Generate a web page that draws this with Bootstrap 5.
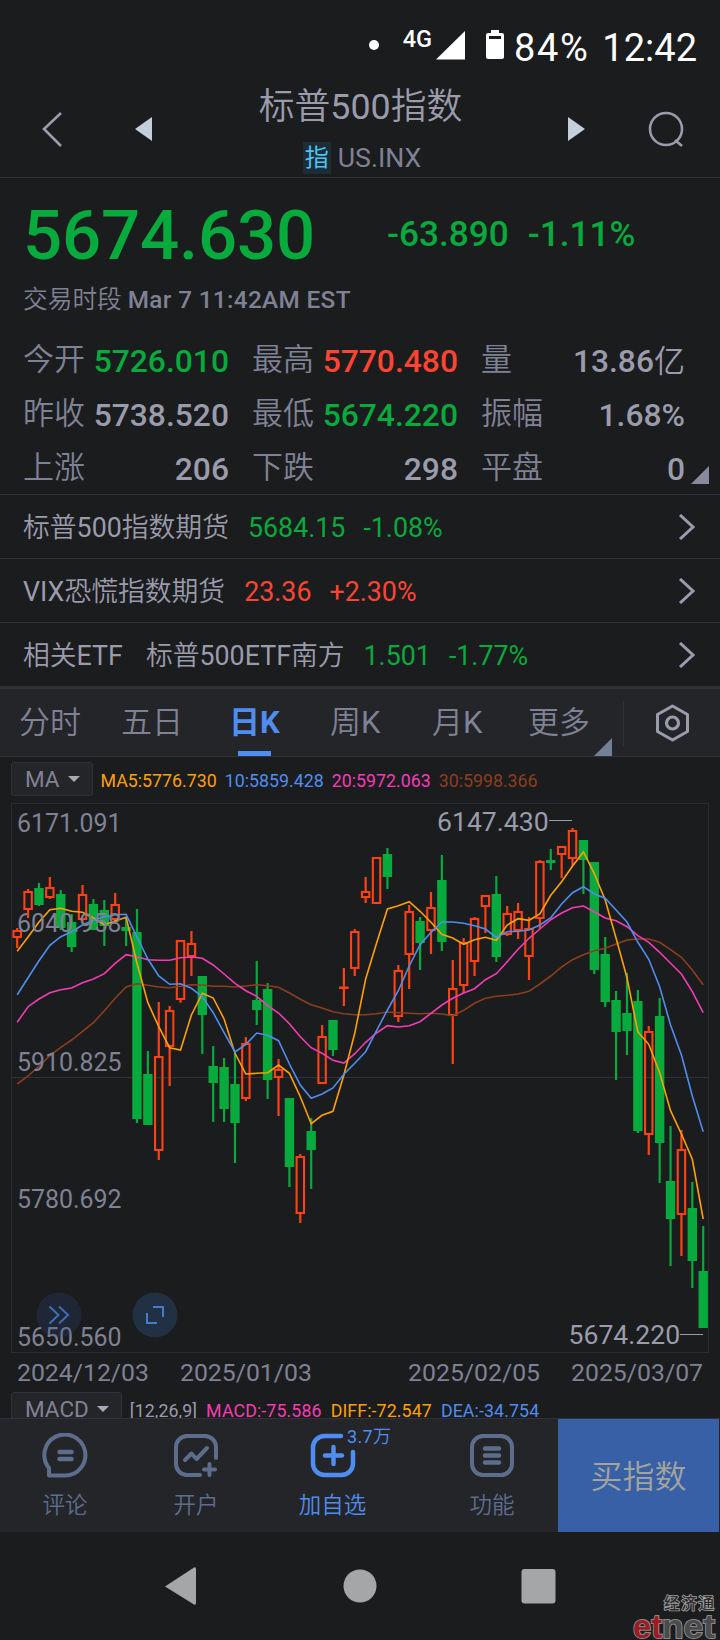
<!DOCTYPE html>
<html lang="zh-CN">
<head>
<meta charset="utf-8">
<meta name="viewport" content="width=device-width, initial-scale=1">
<title>标普500指数</title>
<link href="https://cdn.jsdelivr.net/npm/bootstrap@5.3.0/dist/css/bootstrap.min.css" rel="stylesheet">
<style>
:root{--bg:#1b1c1e;--panel:#242529;--rule:#30313b;--up:#ff4532;--down:#07aa3c;--txt:#9a9bab;--dim:#7f8294;--blue:#4f8df0;--slate:#5d6d8c}
body{background:var(--bg);color:var(--txt);font-family:Roboto,"Noto Sans CJK SC",sans-serif;width:720px;height:1640px;overflow:hidden;margin:0}
svg{display:block;flex:none}
i{font-style:normal;font-weight:400}
.down{color:var(--down)}.up{color:var(--up)}.dim{color:var(--dim)}.blue{color:var(--blue)}
.status{height:76px;padding:30px 23px 0 0;color:#fff;font-size:38px;line-height:36px}
.g4{font-size:23.5px;font-weight:500;line-height:19px}
.bat{letter-spacing:1.6px}
.head{height:102px;border-bottom:1px solid var(--rule);padding:0 36px 0 41px}
.title{font-size:35.8px;line-height:44px;font-weight:350}
.code{font-size:26.7px;line-height:32px}
.tag{font-size:24px;line-height:32px;width:28px;background:#1c2d36;color:#4cc3f7;margin-right:7px}
.quote{height:317px;border-bottom:1px solid var(--rule);padding:20px 35px 0 23px}
.price{font-size:69px;line-height:76px;font-weight:500;width:364px;letter-spacing:-.2px}
.chg{font-size:35.2px;line-height:40px;font-weight:500;margin-top:16px}
.sess{font-size:24.3px;line-height:30px;margin-top:11px;font-weight:500;letter-spacing:.35px}
.sess span,.stats span{font-weight:350}
.sess span{font-size:24.7px;letter-spacing:0;margin-right:6px}
.stats{display:grid;grid-template-columns:206px 206px 204px;column-gap:23px;grid-auto-rows:54px;margin-top:19px;font-size:31.8px;font-weight:500;line-height:54px}
.stats .dim{font-size:31px;line-height:52px}
.stats div div span{font-size:31px}
.linkrow{height:64px;border-bottom:1px solid var(--rule);padding:3px 24px 0 23px;font-size:26.8px;white-space:pre}
.linkrow svg{margin-top:-3px}
.linkrow.end{height:66px;border-bottom:3px solid var(--rule)}
.lk{font-weight:350}
.tabs{height:68px;background:var(--panel);border-bottom:1px solid var(--rule);font-size:31px;line-height:68px;padding-left:19px;font-weight:350}
.tabs>div{flex:none}
.on{color:var(--blue);font-weight:700;position:relative}
.on::after{content:"";position:absolute;left:9px;bottom:0;width:33px;height:5px;background:var(--blue)}
.ind{height:46px;font-size:17.8px;padding:5px 0 0 11px}
.pick{height:34px;background:var(--panel);border:1px solid var(--rule);border-radius:3px;font-size:22.5px;color:var(--dim);padding:2px 12px 0 13px;margin-right:8px}
.caret{border:6px solid transparent;border-top:6px solid #a7a9b8;border-bottom:0;margin:-3px 0 0 8px}
.vals{height:38px;gap:8px}
.chart{height:550px}
.chart text{font-family:Roboto,sans-serif;font-size:24.9px;fill:var(--dim)}
.chart .ext{font-size:26.6px;fill:var(--txt)}
.dates{height:37px;font-size:24.8px;line-height:39px;padding:0 17px;color:var(--dim)}
.macd{height:28px;overflow:hidden;padding-top:2px}
.macd .vals{gap:9px;letter-spacing:.1px}
.bar{height:114px;background:var(--panel);border-top:1px solid var(--rule);color:var(--slate);font-size:22.5px;font-weight:350;line-height:30px}
.bar>div{position:relative;padding-top:14px}
.bar svg{margin-bottom:11px}
.cnt{position:absolute;font-size:18px;line-height:22px;left:85px;top:7px;letter-spacing:.3px}
.buy{width:161px;height:113px;background:#3760a6;color:#a5a39d;font-size:32px;line-height:116px}
.nav3{height:108px;position:relative}
.wm{position:absolute;right:3px;bottom:0;text-align:right}
.wm text{paint-order:stroke}
</style>
<script src="https://cdn.jsdelivr.net/npm/bootstrap@5.3.0/dist/js/bootstrap.bundle.min.js"></script>
</head>
<body>
<div class="status d-flex justify-content-end">
  <svg width="12" height="36"><circle cx="6" cy="15" r="5" fill="#fff"/></svg>
  <span class="g4" style="margin-left:23px">4G</span>
  <svg width="30" height="32" style="margin-left:4px"><path d="M0 29.500 29 1V29.500Z" fill="#fff"/></svg>
  <svg width="18" height="32" style="margin:0 10px 0 20px"><path fill="#fff" fill-rule="evenodd" d="M5 0h8v3h3a2 2 0 0 1 2 2v22a2 2 0 0 1-2 2H2a2 2 0 0 1-2-2V5a2 2 0 0 1 2-2h3zM3 6v3h12V6z"/></svg>
  <span class="bat">84%</span><span style="margin-left:13px">12:42</span>
</div>
<div class="head d-flex justify-content-between">
  <svg width="112" height="102"><path d="M20 37 3 53 20 70" fill="none" stroke="#9a9bab" stroke-width="2.6"/><path d="M94 53 111 41V65Z" fill="#c3d0dc"/></svg>
  <div class="text-center" style="margin-top:9px">
    <div class="title">标普<i>500</i>指数</div>
    <div class="code dim d-flex justify-content-center" style="margin-top:13px;margin-left:3px"><span class="tag">指</span>US.INX</div>
  </div>
  <svg width="116" height="102"><path d="M0 41 17 53 0 65Z" fill="#c3d0dc"/><circle cx="98" cy="53" r="16" fill="none" stroke="#9a9bab" stroke-width="2.6"/><path d="M107 64 114 70" stroke="#9a9bab" stroke-width="2.6"/></svg>
</div>
<div class="quote position-relative">
  <div class="d-flex down"><div class="price">5674.630</div><div class="chg">-63.890</div><div class="chg" style="margin-left:19px">-1.11%</div></div>
  <div class="sess dim"><span>交易时段</span>Mar 7 11:42AM EST</div>
  <div class="stats">
    <div class="d-flex justify-content-between"><span class="dim">今开</span><div class="down">5726.010</div></div>
    <div class="d-flex justify-content-between"><span class="dim">最高</span><div class="up">5770.480</div></div>
    <div class="d-flex justify-content-between"><span class="dim">量</span><div>13.86<span>亿</span></div></div>
    <div class="d-flex justify-content-between"><span class="dim">昨收</span><div>5738.520</div></div>
    <div class="d-flex justify-content-between"><span class="dim">最低</span><div class="down">5674.220</div></div>
    <div class="d-flex justify-content-between"><span class="dim">振幅</span><div>1.68%</div></div>
    <div class="d-flex justify-content-between"><span class="dim">上涨</span><div>206</div></div>
    <div class="d-flex justify-content-between"><span class="dim">下跌</span><div>298</div></div>
    <div class="d-flex justify-content-between"><span class="dim">平盘</span><div>0</div></div>
  </div>
  <svg class="position-absolute" style="right:11px;bottom:10px" width="18" height="18"><path d="M0 18 18 0V18Z" fill="#868a9a"/></svg>
</div>
<div class="linkrow d-flex align-items-center"><span class="lk">标普<i>500</i>指数期货</span><span class="down" style="margin-left:19px">5684.15</span><span class="down" style="margin-left:18px">-1.08%</span><svg class="ms-auto" width="18" height="26"><path d="M2 1 15 13 2 25" fill="none" stroke="#9a9bab" stroke-width="3"/></svg></div>
<div class="linkrow d-flex align-items-center"><span class="lk"><i>VIX</i>恐慌指数期货</span><span class="up" style="margin-left:19px">23.36</span><span class="up" style="margin-left:18px">+2.30%</span><svg class="ms-auto" width="18" height="26"><path d="M2 1 15 13 2 25" fill="none" stroke="#9a9bab" stroke-width="3"/></svg></div>
<div class="linkrow end d-flex align-items-center"><span class="lk">相关<i>ETF</i></span><span class="lk" style="margin-left:23px">标普<i>500ETF</i>南方</span><span class="down" style="margin-left:19px">1.501</span><span class="down" style="margin-left:18px">-1.77%</span><svg class="ms-auto" width="18" height="26"><path d="M2 1 15 13 2 25" fill="none" stroke="#9a9bab" stroke-width="3"/></svg></div>
<div class="tabs d-flex dim">
  <div style="width:102px">分时</div><div style="width:108px">五日</div><div class="on" style="width:101px">日K</div><div style="width:102px">周<i>K</i></div><div style="width:96px">月<i>K</i></div><div style="width:65px">更多</div>
  <svg width="127" height="68"><path d="M1 67 19 49V67Z" fill="#718096"/><path d="M30.500 12V57" stroke="#30313b"/><path d="M79.500 17 94.500 25.500V42.500L79.500 51 64.500 42.500V25.500Z" fill="none" stroke="#9a9bab" stroke-width="3" stroke-linejoin="round"/><circle cx="79.500" cy="34" r="6" fill="none" stroke="#9a9bab" stroke-width="3.200"/></svg>
</div>
<div class="ind d-flex">
  <div class="pick d-flex align-items-center">MA<b class="caret"></b></div>
  <div class="vals d-flex align-items-center"><span style="color:#ffa000">MA5:5776.730</span><span class="blue">10:5859.428</span><span style="color:#f53cb4">20:5972.063</span><span style="color:#8c3e1e">30:5998.366</span></div>
</div>
<svg class="chart" id="chart" width="720" height="550" viewBox="0 803 720 550"></svg>
<div class="dates d-flex"><span>2024/12/03</span><span style="margin-left:31px">2025/01/03</span><span class="ms-auto">2025/02/05</span><span style="margin-left:31px">2025/03/07</span></div>
<div class="ind macd d-flex">
  <div class="pick d-flex align-items-center">MACD<b class="caret"></b></div>
  <div class="vals d-flex align-items-center"><span>[12,26,9]</span><span style="color:#f53cb4">MACD:-75.586</span><span style="color:#ffa000">DIFF:-72.547</span><span class="blue">DEA:-34.754</span></div>
</div>
<div class="bar d-flex text-center">
  <div style="width:130px"><svg class="mx-auto" width="46" height="46" viewBox="0 0 46 46" fill="none" stroke="#5d6d8c" stroke-width="4"><path d="M7 42.500V35A20.500 20.500 0 1 1 23 42.500Z" stroke-linejoin="round"/><path d="M17.500 19H29.500M17.500 26H29.500" stroke-width="4.500" stroke-linecap="round"/></svg>评论</div>
  <div style="width:132px"><svg class="mx-auto" width="46" height="46" viewBox="0 0 46 46" fill="none" stroke="#5d6d8c" stroke-width="4" stroke-linecap="round" stroke-linejoin="round"><path d="M43 25V14A11 11 0 0 0 32 3H14A11 11 0 0 0 3 14V31A11 11 0 0 0 14 42H27"/><path d="M12 27 18.500 20.500 23.500 26 34 15M36.500 31V42M31 36.500H42"/></svg>开户</div>
  <div style="width:141px" class="blue"><svg class="mx-auto" width="46" height="46" viewBox="0 0 46 46" fill="none" stroke="#4f8df0" stroke-width="4.500" stroke-linecap="round"><path d="M31 3H14.500A11.500 11.500 0 0 0 3 14.500V30.500A11.500 11.500 0 0 0 14.500 42H31.500A11.500 11.500 0 0 0 43 30.500V19M23.500 14V31M15 22.500H32"/></svg>加自选<span class="cnt"><i>3.7</i>万</span></div>
  <div style="width:155px;padding-left:23px"><svg class="mx-auto" width="46" height="46" viewBox="0 0 46 46" fill="none" stroke="#5d6d8c" stroke-width="4"><rect x="3" y="3" width="40" height="39" rx="11"/><path d="M16 15.500H30M16 22.500H30M16 29.500H30" stroke-width="4.500" stroke-linecap="round"/></svg>功能</div>
  <div class="buy p-0">买指数</div>
</div>
<div class="nav3">
  <svg width="720" height="108" fill="#a5a6a8"><path d="M165 54.500 194 35.500Q196 34.500 196 37.500V70.500Q196 73.500 194 72.500Z"/><circle cx="360" cy="54" r="16.500"/><rect x="521.500" y="37" width="34" height="34.500" rx="3"/></svg>
  <svg class="wm" width="92" height="48"><text x="39" y="17" font-size="15.500" textLength="50" font-weight="500" fill="#2a2a2a" stroke="#a0a0a0" stroke-width="1.600">经济通</text><g font-family="Liberation Sans" font-weight="700" font-size="34" stroke="#8a8a8a" stroke-width="2"><text x="8" y="46" fill="#9c1c22" textLength="29" lengthAdjust="spacingAndGlyphs">et</text><text x="37" y="46" fill="#4a4b4d" textLength="53" lengthAdjust="spacingAndGlyphs">net</text></g></svg>
</div>
<script>
// Each candle: direction (u/d), body top, body bottom, high, low
const candles = `u930 938 928 948|u891 910 889 918|d888 905 883 906|u887 898 877 899|d894 928 890 930|d922 947 914 952|u894 920 885 921|d904 930 899 930|d910 926 900 946|u904 920 893 924|d927 931 918 946|d932 1119 909 1123|d1074 1125 1051 1125|u1056 1151 1002 1160|u1010 1047 1006 1086|u940 1000 940 1002.700|u943 957 931 976|d976 1015 976 1054|d1066 1083 1046 1122|d1067 1109 1058 1122|d1084 1123 1053 1163|u1043 1099 1037 1101|d1000 1010 961 1025|d989 1080 983 1099|u1069 1078 1059 1116|d1098 1167 1098 1187|u1156 1214 1154 1223|d1131 1150 1118 1189|u1036 1084 1025 1084|d1020 1050 1020 1056|u986.500 989 968 1006|u931 969 929 976|u891 898 877 903|u857 904 857 904|d854 877 848 889|u970 1017 965 1022|u911 955 905 989|d921 943 917 970|u907 931 892 954|d880 942 855 951|u988 1016 960 1064|u942 986 938 993|u918 962 917 976|u895 907 895 933|d894 957 876 962|u913 935 906 936|u911 931 903 939|u928 957 917 980|u861 919 860 929|d860 863 849 870|u846 855 846 878|u830 859 828 866|d840 860 840 894|d862 970 862 974|d954 1002 937 1007|d1000 1032 991 1080|d1013 1031 973 1055|d1001 1131 990 1133|u1031 1135 1026 1155|d1016 1143 998 1183|d1181 1219 1126 1266|u1149 1215 1130 1256|d1208 1261 1182 1288|d1271 1328 1226 1328`.split('|');
const averages = {
 '#8c3e1e':'1084 1076 1066 1055.7 1047.3 1040 1031.3 1022.7 1010.7 998.3 987 983.7 985.3 987 987.7 986.3 984.7 985 986.3 986.3 987 986 984.7 985.7 987.3 993 999.3 1004.7 1008 1011.7 1013.7 1014.7 1014.7 1013.7 1012 1012.7 1013.3 1013.7 1013.3 1014 1015.7 1010.3 1003.3 998.3 996.3 995.3 994 991.3 984 976 967 959.7 954.7 950.7 948.3 944 940 939 939 942.3 949.7 957.3 970 984.7',
 '#f53cb4':'1022.3 1006.7 999 992.7 989.7 988 982.7 979 973.7 963.3 954.7 956.7 959.7 960.3 960.3 957.7 957 958.3 965 974 983.3 990.7 996.3 1005.7 1013 1023.7 1036.7 1047.7 1053.3 1060.3 1063 1053.7 1042.3 1033 1025.7 1027 1025.7 1021.7 1013.3 1005 998.3 993 988.7 979.7 973.7 961.7 949.3 938.3 929 919.7 913 907.7 906 911.7 918 920.7 926.7 935.7 942.3 952.3 963.3 974 991.7 1012.7',
 '#ffa000':'951.3 937 922 909.7 908.3 911.3 912.3 918 924.7 921 917.3 963.3 1002.7 1026.7 1047.7 1050 1015 993.3 998 1019 1053.3 1074 1073.3 1072.7 1065 1073.3 1096.7 1123.7 1115.3 1111.3 1075 1033.3 979 943.3 909 905.7 901.7 911.3 922.3 934.3 938 944.3 939.7 937.3 940.3 925 918.7 920.3 914 895.3 881.7 866 852 873.7 900 938.3 977.7 1032 1044.3 1072.7 1110.7 1134 1159.3 1219',
 '#4f8df0':'994.7 977.7 960.7 945.3 936.7 931.7 925 920.3 916.7 914.7 914.3 937 959 976 984.3 983.7 988.3 996.7 1012.7 1032.7 1052 1044.3 1033 1035.3 1040.7 1064 1085 1098.3 1094 1088 1074.3 1063.3 1051.7 1030.7 1010 990.7 966 944.7 932.3 922 922 923.3 925.7 929 937.3 931.7 931.3 930 925 917.7 904 892.7 886.7 894 898.3 910 922 942.3 959.3 986.7 1025 1055 1096 1131.7'
};
const X = i => 17.2 + i * 10.889;
let s = '<rect x="11.5" y="803.5" width="697" height="549" fill="none" stroke="#2a2b33"/><path d="M12 1077.5H708" stroke="#30313b"/>';
candles.forEach((c, i) => {
  const [a, b, h, l] = c.slice(1).split(' ').map(Number), x = X(i);
  if (c[0] === 'd') s += `<path d="M${x} ${h}V${l}" stroke="#07aa3c" stroke-width="2.2"/><rect x="${x - 4.7}" y="${a}" width="9.4" height="${b - a}" fill="#07aa3c"/>`;
  else s += `<path d="M${x} ${h}V${a}M${x} ${b}V${l}" stroke="#ff4214" stroke-width="2.2"/><rect x="${x - 3.7}" y="${a + 1}" width="7.4" height="${Math.max(b - a - 2, .5)}" fill="none" stroke="#ff4214" stroke-width="2.1"/>`;
});
for (const [color, ys] of Object.entries(averages))
  s += `<polyline fill="none" stroke="${color}" stroke-width="1.6" points="${ys.split(' ').map((y, i) => X(i) + ',' + y).join(' ')}"/>`;
[[831.5, '6171.091'], [932, '6040.958'], [1070.5, '5910.825'], [1207.5, '5780.692'], [1345.5, '5650.560']].forEach(([y, t]) => s += `<text x="17" y="${y}">${t}</text>`);
s += '<text class="ext" x="437" y="831">6147.430</text><text class="ext" x="568.5" y="1344.300">5674.220</text><path d="M549 820.500H572M680 1334.500H703" stroke="#9a9bab"/>';
s += '<circle cx="59" cy="1315" r="22.500" fill="#2a4680" fill-opacity=".25"/><circle cx="155" cy="1315" r="22.500" fill="#223044"/>';
s += '<path d="M49.500 1306.500 58.500 1315 49.500 1323.500M59 1306.500 68 1315 59 1323.500" fill="none" stroke="#406db9" stroke-width="2"/><path d="M153 1307H163V1317M147 1313V1323H157" fill="none" stroke="#437cc8" stroke-width="2"/>';
document.getElementById('chart').innerHTML = s;
</script>
</body>
</html>
